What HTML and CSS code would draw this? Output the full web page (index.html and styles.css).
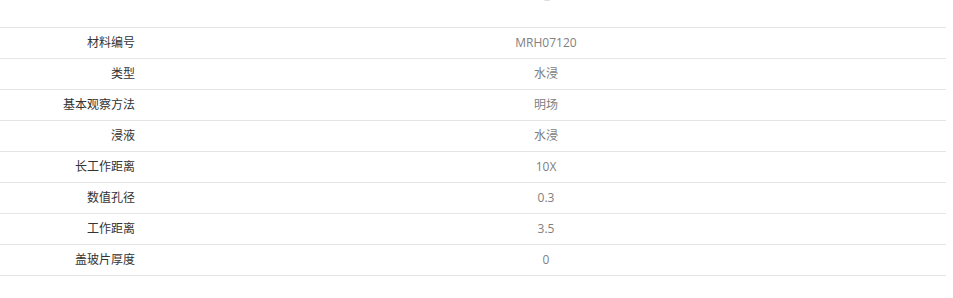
FILE: index.html
```html
<!DOCTYPE html>
<html lang="zh-CN">
<head>
<meta charset="utf-8">
<title>参数</title>
<link rel="stylesheet" href="styles.css">
</head>
<body>
<div class="page">
  <div class="spinner"></div>
  <table class="specs">
    <tbody>
      <tr><th>材料编号</th><td>MRH07120</td></tr>
      <tr><th>类型</th><td>水浸</td></tr>
      <tr><th>基本观察方法</th><td>明场</td></tr>
      <tr><th>浸液</th><td>水浸</td></tr>
      <tr><th>长工作距离</th><td>10X</td></tr>
      <tr><th>数值孔径</th><td>0.3</td></tr>
      <tr><th>工作距离</th><td>3.5</td></tr>
      <tr><th>盖玻片厚度</th><td>0</td></tr>
    </tbody>
  </table>
</div>
</body>
</html>
```
FILE: styles.css
```css
html, body {
  margin: 0;
  padding: 0;
  background: #fff;
}
body {
  font-family: "Open Sans", "Noto Sans CJK SC", sans-serif;
  font-size: 12px;
}
.page {
  position: relative;
  width: 946px;
  padding-top: 27px;
}
.spinner {
  position: absolute;
  left: 540px;
  top: -13px;
  width: 14px;
  height: 14px;
  border-radius: 50%;
  background: #d8d8d8;
}
.specs {
  width: 946px;
  border-collapse: collapse;
  border-top: 1px solid #e5e5e5;
}
.specs tr {
  border-bottom: 1px solid #e5e5e5;
}
.specs th,
.specs td {
  height: 30px;
  padding: 0;
  font-weight: normal;
  line-height: 30px;
}
.specs th {
  width: 135px;
  padding-right: 11px;
  text-align: right;
  color: #333;
}
.specs td {
  text-align: center;
  color: #808080;
}
```
